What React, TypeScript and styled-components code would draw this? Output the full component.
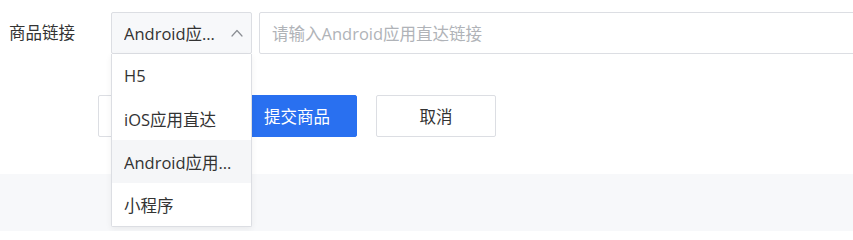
import React from "react";
import styled, { createGlobalStyle } from "styled-components";

const GlobalStyle = createGlobalStyle`
  html, body {
    margin: 0;
    padding: 0;
    background: #ffffff;
    font-family: "Open Sans", "Noto Sans CJK SC", sans-serif;
    color: #333333;
  }
`;

const FONT = `"Open Sans", "Noto Sans CJK SC", sans-serif`;

const OPTIONS = ["H5", "iOS应用直达", "Android应用直达", "小程序"];

const App = () => {
  const selected = 2;
  return (
    <Page>
      <GlobalStyle />
      <FormArea>
        <Row>
          <Label>商品链接</Label>
          <SelectWrap>
            <Trigger>
              <TriggerText>{OPTIONS[selected]}</TriggerText>
              <svg width="12" height="8" viewBox="0 0 12 8" fill="none">
                <polyline
                  points="1,7 6,1.5 11,7"
                  stroke="#8a8d93"
                  strokeWidth="1.2"
                  strokeLinecap="round"
                  strokeLinejoin="round"
                />
              </svg>
            </Trigger>
            <Menu>
              {OPTIONS.map((item, index) => (
                <MenuItem key={index} $active={index === selected}>
                  <ItemText>{item}</ItemText>
                </MenuItem>
              ))}
            </Menu>
          </SelectWrap>
          <Input placeholder="请输入Android应用直达链接" />
        </Row>
        <Actions>
          <Button>预览</Button>
          <Button $primary>提交商品</Button>
          <Button>取消</Button>
        </Actions>
      </FormArea>
      <Footer />
    </Page>
  );
};

const Page = styled.div`
  display: flex;
  flex-direction: column;
  width: 853px;
  height: 231px;
  overflow: hidden;
`;

const FormArea = styled.div`
  height: 174px;
  box-sizing: border-box;
  padding: 12px 0 0 9px;
  background: #ffffff;
  position: relative;
  z-index: 1;
`;

const Row = styled.div`
  display: flex;
  align-items: center;
  height: 42px;
`;

const Label = styled.label`
  width: 102px;
  flex-shrink: 0;
  font-size: 16.5px;
  color: #333333;
  font-family: ${FONT};
  line-height: 42px;
`;

const SelectWrap = styled.div`
  position: relative;
  width: 141px;
  height: 42px;
  flex-shrink: 0;
`;

const Trigger = styled.div`
  display: flex;
  align-items: center;
  justify-content: space-between;
  height: 100%;
  box-sizing: border-box;
  padding: 0 8px 0 12px;
  background: #f7f8fa;
  border: 1px solid #dcdee3;
  border-radius: 2px;
  cursor: pointer;
  svg {
    flex-shrink: 0;
    margin-left: 6px;
  }
`;

const TriggerText = styled.span`
  font-size: 16.5px;
  color: #333333;
  white-space: nowrap;
  overflow: hidden;
  text-overflow: ellipsis;
`;

const Menu = styled.ul`
  position: absolute;
  top: 42px;
  left: 0;
  width: 141px;
  box-sizing: border-box;
  margin: 0;
  padding: 0;
  list-style: none;
  background: #ffffff;
  border: 1px solid #dcdee3;
  border-top: none;
  border-radius: 0 0 2px 2px;
  box-shadow: 0 2px 6px rgba(0, 0, 0, 0.06);
  z-index: 10;
`;

const MenuItem = styled.li<{ $active?: boolean }>`
  height: 43px;
  display: flex;
  align-items: center;
  padding: 0 12px;
  background: ${(p) => (p.$active ? "#f5f6f8" : "#ffffff")};
  cursor: pointer;
`;

const ItemText = styled.span`
  font-size: 16.5px;
  color: #333333;
  white-space: nowrap;
  overflow: hidden;
  text-overflow: ellipsis;
`;

const Input = styled.input`
  flex: 1;
  min-width: 0;
  height: 42px;
  box-sizing: border-box;
  margin-left: 7px;
  margin-right: -2px;
  padding: 0 12px;
  border: 1px solid #dcdee3;
  border-radius: 2px;
  font-size: 16.5px;
  font-family: ${FONT};
  color: #333333;
  outline: none;
  &::placeholder {
    color: #b0b3b8;
  }
`;

const Actions = styled.div`
  display: flex;
  gap: 19px;
  margin-top: 41px;
  margin-left: 89px;
`;

const Button = styled.button<{ $primary?: boolean }>`
  width: 120px;
  height: 42px;
  box-sizing: border-box;
  border-radius: 2px;
  font-size: 16.5px;
  font-family: ${FONT};
  cursor: pointer;
  border: 1px solid ${(p) => (p.$primary ? "#2970f0" : "#dcdee3")};
  background: ${(p) => (p.$primary ? "#2970f0" : "#ffffff")};
  color: ${(p) => (p.$primary ? "#ffffff" : "#333333")};
`;

const Footer = styled.div`
  flex: 1;
  background: #f7f8fa;
`;

export default App;
